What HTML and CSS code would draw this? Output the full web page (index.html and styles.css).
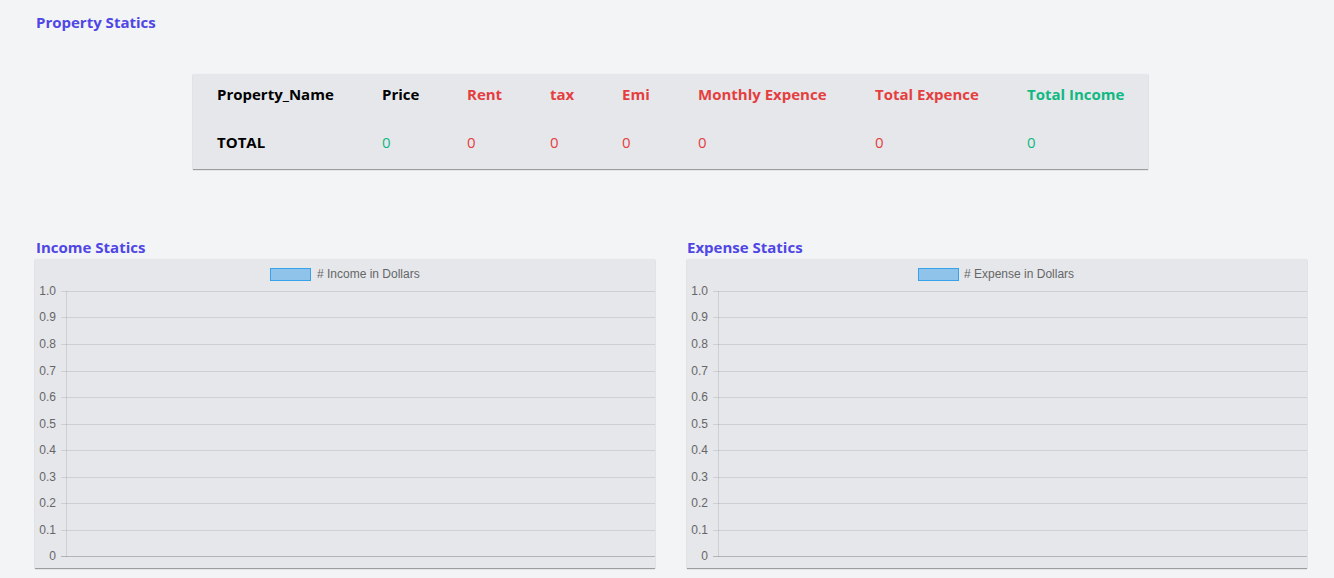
FILE: index.html
```html
<!DOCTYPE html>
<html lang="en">
<head>
<meta charset="utf-8">
<title>Property Statics</title>
<link rel="stylesheet" href="styles.css">
</head>
<body>
<main class="page">
  <h2 class="heading">Property Statics</h2>
  <div class="table-wrap">
    <table class="stats">
      <colgroup>
        <col class="c1"><col class="c2"><col class="c3"><col class="c4"><col class="c5"><col class="c6"><col class="c7"><col class="c8">
      </colgroup>
      <thead>
        <tr>
          <th>Property_Name</th>
          <th>Price</th>
          <th class="red">Rent</th>
          <th class="red">tax</th>
          <th class="red">Emi</th>
          <th class="red">Monthly Expence</th>
          <th class="red">Total Expence</th>
          <th class="green">Total Income</th>
        </tr>
      </thead>
      <tbody>
        <tr>
          <td class="name">TOTAL</td>
          <td class="green">0</td>
          <td class="red">0</td>
          <td class="red">0</td>
          <td class="red">0</td>
          <td class="red">0</td>
          <td class="red">0</td>
          <td class="green">0</td>
        </tr>
      </tbody>
    </table>
  </div>

  <div class="charts">
    <section class="chart-col">
      <h2 class="heading">Income Statics</h2>
      <div class="chart-card">
        <svg class="chart" width="620" height="309" viewBox="0 0 620 309">
          <rect x="235.5" y="9.5" width="40" height="12" fill="#8fc3ea" stroke="#36a2eb" stroke-width="1"/>
          <text x="282" y="19" class="legend"># Income in Dollars</text>
          <g class="grid">
            <line x1="26" y1="32.5" x2="620" y2="32.5"/>
            <line x1="26" y1="58.5" x2="620" y2="58.5"/>
            <line x1="26" y1="85.5" x2="620" y2="85.5"/>
            <line x1="26" y1="112.5" x2="620" y2="112.5"/>
            <line x1="26" y1="138.5" x2="620" y2="138.5"/>
            <line x1="26" y1="165.5" x2="620" y2="165.5"/>
            <line x1="26" y1="191.5" x2="620" y2="191.5"/>
            <line x1="26" y1="218.5" x2="620" y2="218.5"/>
            <line x1="26" y1="244.5" x2="620" y2="244.5"/>
            <line x1="26" y1="271.5" x2="620" y2="271.5"/>
            <line x1="31.5" y1="32" x2="31.5" y2="298"/>
          </g>
          <line class="zero" x1="26" y1="297.5" x2="620" y2="297.5"/>
          <g class="ticks">
            <text x="21" y="36">1.0</text>
            <text x="21" y="62">0.9</text>
            <text x="21" y="89">0.8</text>
            <text x="21" y="116">0.7</text>
            <text x="21" y="142">0.6</text>
            <text x="21" y="169">0.5</text>
            <text x="21" y="195">0.4</text>
            <text x="21" y="222">0.3</text>
            <text x="21" y="248">0.2</text>
            <text x="21" y="275">0.1</text>
            <text x="21" y="301">0</text>
          </g>
        </svg>
      </div>
    </section>
    <section class="chart-col">
      <h2 class="heading">Expense Statics</h2>
      <div class="chart-card">
        <svg class="chart" width="620" height="309" viewBox="0 0 620 309">
          <rect x="231.5" y="9.5" width="40" height="12" fill="#8fc3ea" stroke="#36a2eb" stroke-width="1"/>
          <text x="277" y="19" class="legend"># Expense in Dollars</text>
          <g class="grid">
            <line x1="26" y1="32.5" x2="620" y2="32.5"/>
            <line x1="26" y1="58.5" x2="620" y2="58.5"/>
            <line x1="26" y1="85.5" x2="620" y2="85.5"/>
            <line x1="26" y1="112.5" x2="620" y2="112.5"/>
            <line x1="26" y1="138.5" x2="620" y2="138.5"/>
            <line x1="26" y1="165.5" x2="620" y2="165.5"/>
            <line x1="26" y1="191.5" x2="620" y2="191.5"/>
            <line x1="26" y1="218.5" x2="620" y2="218.5"/>
            <line x1="26" y1="244.5" x2="620" y2="244.5"/>
            <line x1="26" y1="271.5" x2="620" y2="271.5"/>
            <line x1="31.5" y1="32" x2="31.5" y2="298"/>
          </g>
          <line class="zero" x1="26" y1="297.5" x2="620" y2="297.5"/>
          <g class="ticks">
            <text x="21" y="36">1.0</text>
            <text x="21" y="62">0.9</text>
            <text x="21" y="89">0.8</text>
            <text x="21" y="116">0.7</text>
            <text x="21" y="142">0.6</text>
            <text x="21" y="169">0.5</text>
            <text x="21" y="195">0.4</text>
            <text x="21" y="222">0.3</text>
            <text x="21" y="248">0.2</text>
            <text x="21" y="275">0.1</text>
            <text x="21" y="301">0</text>
          </g>
        </svg>
      </div>
    </section>
  </div>
</main>
</body>
</html>
```
FILE: styles.css
```css
html, body {
  margin: 0;
  padding: 0;
  background: #f3f4f6;
  height: 100%;
  overflow: hidden;
}
body {
  font-family: "Open Sans", "Noto Sans", "Liberation Sans", sans-serif;
  color: #000;
}
.page {
  padding: 11px 28px 0 35px;
}
.heading {
  margin: 0;
  font-size: 15px;
  font-weight: 700;
  line-height: 22px;
  color: #4f46e5;
  padding-left: 1px;
}
.charts .chart-col + .chart-col .heading {
  padding-left: 0;
}
.table-wrap {
  display: flex;
  justify-content: flex-start;
  margin: 41px 0 0 158px;
}
.stats {
  border-collapse: collapse;
  table-layout: fixed;
  width: 955px;
  background: #e5e7eb;
  box-shadow: 0 1px 1px rgba(0, 0, 0, 0.35), 0 0 2px rgba(0, 0, 0, 0.04);
}
.c1 { width: 165px; }
.c2 { width: 85px; }
.c3 { width: 83px; }
.c4 { width: 72px; }
.c5 { width: 76px; }
.c6 { width: 177px; }
.c7 { width: 152px; }
.c8 { width: 145px; }
.stats th {
  text-align: left;
  font-size: 15px;
  font-weight: 700;
  line-height: 20px;
  padding: 10px 0 12px 24px;
  white-space: nowrap;
}
.stats td {
  font-size: 15px;
  line-height: 20px;
  padding: 16px 0 17px 24px;
  white-space: nowrap;
}
.stats td.name {
  font-weight: 700;
}
.red { color: #e53e3e; }
.green { color: #10b981; }

.charts {
  display: flex;
  gap: 32px;
  margin-top: 67px;
}
.chart-col {
  width: 620px;
  display: flex;
  flex-direction: column;
}
.chart-card {
  margin-top: 1px;
  height: 309px;
  background: #e5e7eb;
  box-shadow: 0 1px 1px rgba(0, 0, 0, 0.35), 0 0 2px rgba(0, 0, 0, 0.04);
}
.chart {
  display: block;
}
.legend {
  font-family: "Liberation Sans", Arial, sans-serif;
  font-size: 12px;
  fill: #666;
}
.grid line {
  stroke: rgba(0, 0, 0, 0.1);
  stroke-width: 1;
}
.zero {
  stroke: rgba(0, 0, 0, 0.22);
  stroke-width: 1;
}
.ticks text {
  font-family: "Liberation Sans", Arial, sans-serif;
  font-size: 12px;
  fill: #666;
  text-anchor: end;
}
```
